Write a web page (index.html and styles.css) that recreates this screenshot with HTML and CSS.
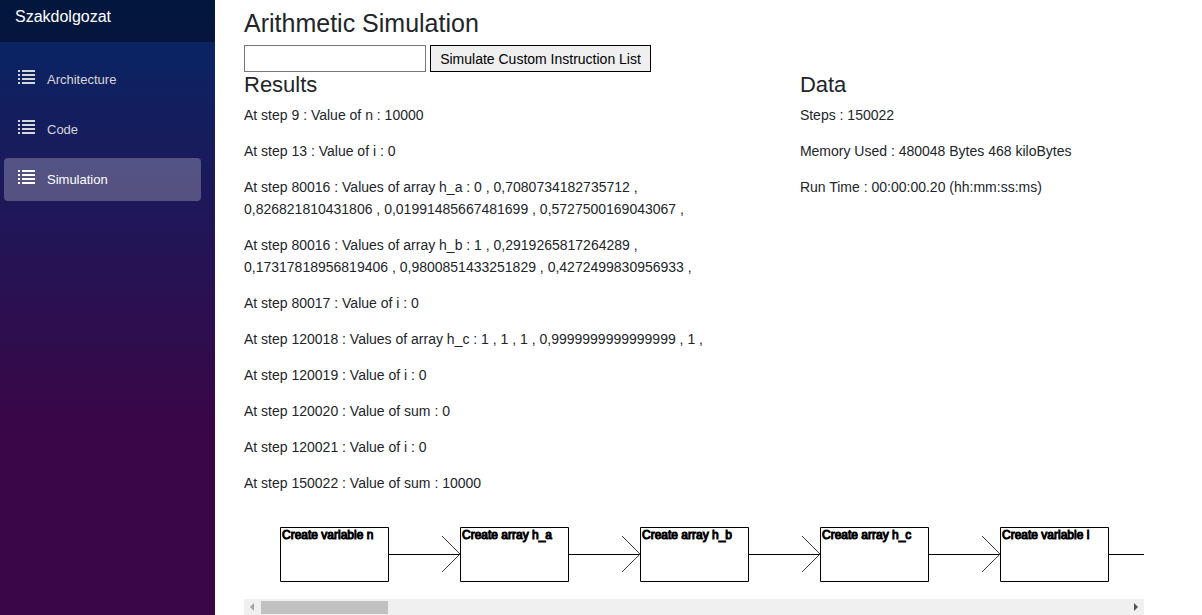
FILE: index.html
```html
<!DOCTYPE html>
<html lang="en">
<head>
<meta charset="utf-8">
<title>Szakdolgozat</title>
<link rel="stylesheet" href="styles.css">
</head>
<body>
<svg class="defs" width="0" height="0" aria-hidden="true">
  <symbol id="list" viewBox="0 0 17 14">
    <path d="M0 0h2v2H0zM4 0h13v2H4zM0 4h2v2H0zM4 4h13v2H4zM0 8h2v2H0zM4 8h13v2H4zM0 12h2v2H0zM4 12h13v2H4z"/>
  </symbol>
</svg>
<div class="page">
  <aside class="sidebar">
    <header class="brand-bar"><a class="brand" href="#">Szakdolgozat</a></header>
    <nav class="nav">
      <a class="nav-link" href="#"><svg class="nav-icon" aria-hidden="true"><use href="#list"/></svg><span>Architecture</span></a>
      <a class="nav-link" href="#"><svg class="nav-icon" aria-hidden="true"><use href="#list"/></svg><span>Code</span></a>
      <a class="nav-link active" href="#" aria-current="page"><svg class="nav-icon" aria-hidden="true"><use href="#list"/></svg><span>Simulation</span></a>
    </nav>
  </aside>
  <main class="content">
    <h1 class="title">Arithmetic Simulation</h1>
    <form class="custom">
      <input class="custom-input" type="text" aria-label="Custom instruction list">
      <button class="custom-button" type="button">Simulate Custom Instruction List</button>
    </form>
    <div class="columns">
      <section class="results">
        <h2 class="subtitle">Results</h2>
        <p>At step 9 : Value of n : 10000</p>
        <p>At step 13 : Value of i : 0</p>
        <p>At step 80016 : Values of array h_a : 0 , 0,7080734182735712 , 0,826821810431806 , 0,01991485667481699 , 0,5727500169043067 ,</p>
        <p>At step 80016 : Values of array h_b : 1 , 0,2919265817264289 , 0,17317818956819406 , 0,9800851433251829 , 0,4272499830956933 ,</p>
        <p>At step 80017 : Value of i : 0</p>
        <p>At step 120018 : Values of array h_c : 1 , 1 , 1 , 0,9999999999999999 , 1 ,</p>
        <p>At step 120019 : Value of i : 0</p>
        <p>At step 120020 : Value of sum : 0</p>
        <p>At step 120021 : Value of i : 0</p>
        <p>At step 150022 : Value of sum : 10000</p>
      </section>
      <section class="data">
        <h2 class="subtitle">Data</h2>
        <p>Steps : 150022</p>
        <p>Memory Used : 480048 Bytes 468 kiloBytes</p>
        <p>Run Time : 00:00:00.20 (hh:mm:ss:ms)</p>
      </section>
    </div>
    <div class="diagram">
      <svg class="flow" width="1080" height="99" role="img" aria-label="Instruction flow">
        <g class="shape">
          <path d="M36.500 27.500h108v54h-108zM216.500 27.500h108v54h-108zM396.500 27.500h108v54h-108zM576.500 27.500h108v54h-108zM756.500 27.500h108v54h-108z"/>
          <path d="M144.500 54.500h72M324.500 54.500h72M504.500 54.500h72M684.500 54.500h72M864.500 54.500h72"/>
        </g>
        <path class="arrow" d="M198 36l18 18l-18 18M378 36l18 18l-18 18M558 36l18 18l-18 18M738 36l18 18l-18 18"/>
        <g class="label">
          <text x="38" y="39">Create variable n</text>
          <text x="218" y="39">Create array h_a</text>
          <text x="398" y="39">Create array h_b</text>
          <text x="578" y="39">Create array h_c</text>
          <text x="758" y="39">Create variable i</text>
        </g>
      </svg>
    </div>
    <div class="scrollbar" aria-hidden="true">
      <svg class="scroll-arrow muted" viewBox="0 0 17 17"><path d="M10 4v8l-4-4z"/></svg>
      <div class="track"><div class="thumb"></div></div>
      <svg class="scroll-arrow" viewBox="0 0 17 17"><path d="M7 4v8l4-4z"/></svg>
    </div>
  </main>
</div>
</body>
</html>
```
FILE: styles.css
```css
* { box-sizing: border-box; }

body {
  margin: 0;
  background: #fff;
  color: #212529;
  font: 14px/22px "Liberation Sans", Arial, sans-serif;
  overflow: hidden;
}

.defs { position: absolute; }

.page {
  display: flex;
  min-height: 100vh;
}

.sidebar {
  flex: 0 0 215px;
  background: linear-gradient(180deg, rgb(5, 39, 103) 0%, #3a0647 70%);
}

.brand-bar {
  height: 42px;
  padding: 6px 15px;
  background: rgba(0, 0, 0, 0.4);
}

.brand {
  color: #fff;
  font-size: 16px;
  text-decoration: none;
}

.nav {
  display: flex;
  flex-direction: column;
  gap: 7px;
  padding: 16px 14px 0 4px;
}

.nav-link {
  display: flex;
  align-items: center;
  gap: 12px;
  height: 43px;
  padding: 0 14px;
  border-radius: 4px;
  color: #d7d7d7;
  font-size: 13px;
  text-decoration: none;
}

.nav-link.active {
  background: rgba(255, 255, 255, 0.25);
  color: #fff;
}

.nav-icon {
  width: 17px;
  height: 14px;
  margin-bottom: 5px;
  fill: currentColor;
}

.content {
  flex: 1;
  min-width: 0;
  padding: 8px 58px 0 29px;
}

h1, h2, p { margin: 0; }

.title {
  font-size: 25px;
  line-height: 30px;
  font-weight: 400;
  margin-bottom: 7px;
}

.custom {
  display: flex;
  gap: 4px;
}

.custom-input {
  width: 182px;
  height: 27px;
  border: 1px solid #767676;
  background: #fff;
  font: inherit;
}

.custom-button {
  min-width: 221px;
  height: 27px;
  padding: 0 6px;
  border: 1px solid #000;
  background: #efefef;
  color: #000;
  font: inherit;
}

.columns {
  display: grid;
  grid-template-columns: 21fr 13fr;
}

.results { padding-right: 30px; }

.subtitle {
  font-size: 22px;
  line-height: 26px;
  font-weight: 400;
  margin-bottom: 6px;
}

.columns p { margin-bottom: 14px; }

.diagram {
  overflow: hidden;
  margin-top: -8px;
}

.flow { display: block; }

.shape, .arrow {
  fill: none;
  stroke: #000;
}

.arrow { stroke: #444; }

.label {
  font-size: 12px;
  fill: #000;
  stroke: #000;
  stroke-width: 1px;
}

.scrollbar {
  display: flex;
  height: 16px;
  background: #f0f0f0;
}

.scroll-arrow {
  width: 17px;
  height: 17px;
  fill: #505050;
}

.scroll-arrow.muted { fill: #a3a3a3; }

.track {
  flex: 1;
  padding-top: 2px;
}

.thumb {
  width: 127px;
  height: 13px;
  background: #c1c1c1;
}
```
